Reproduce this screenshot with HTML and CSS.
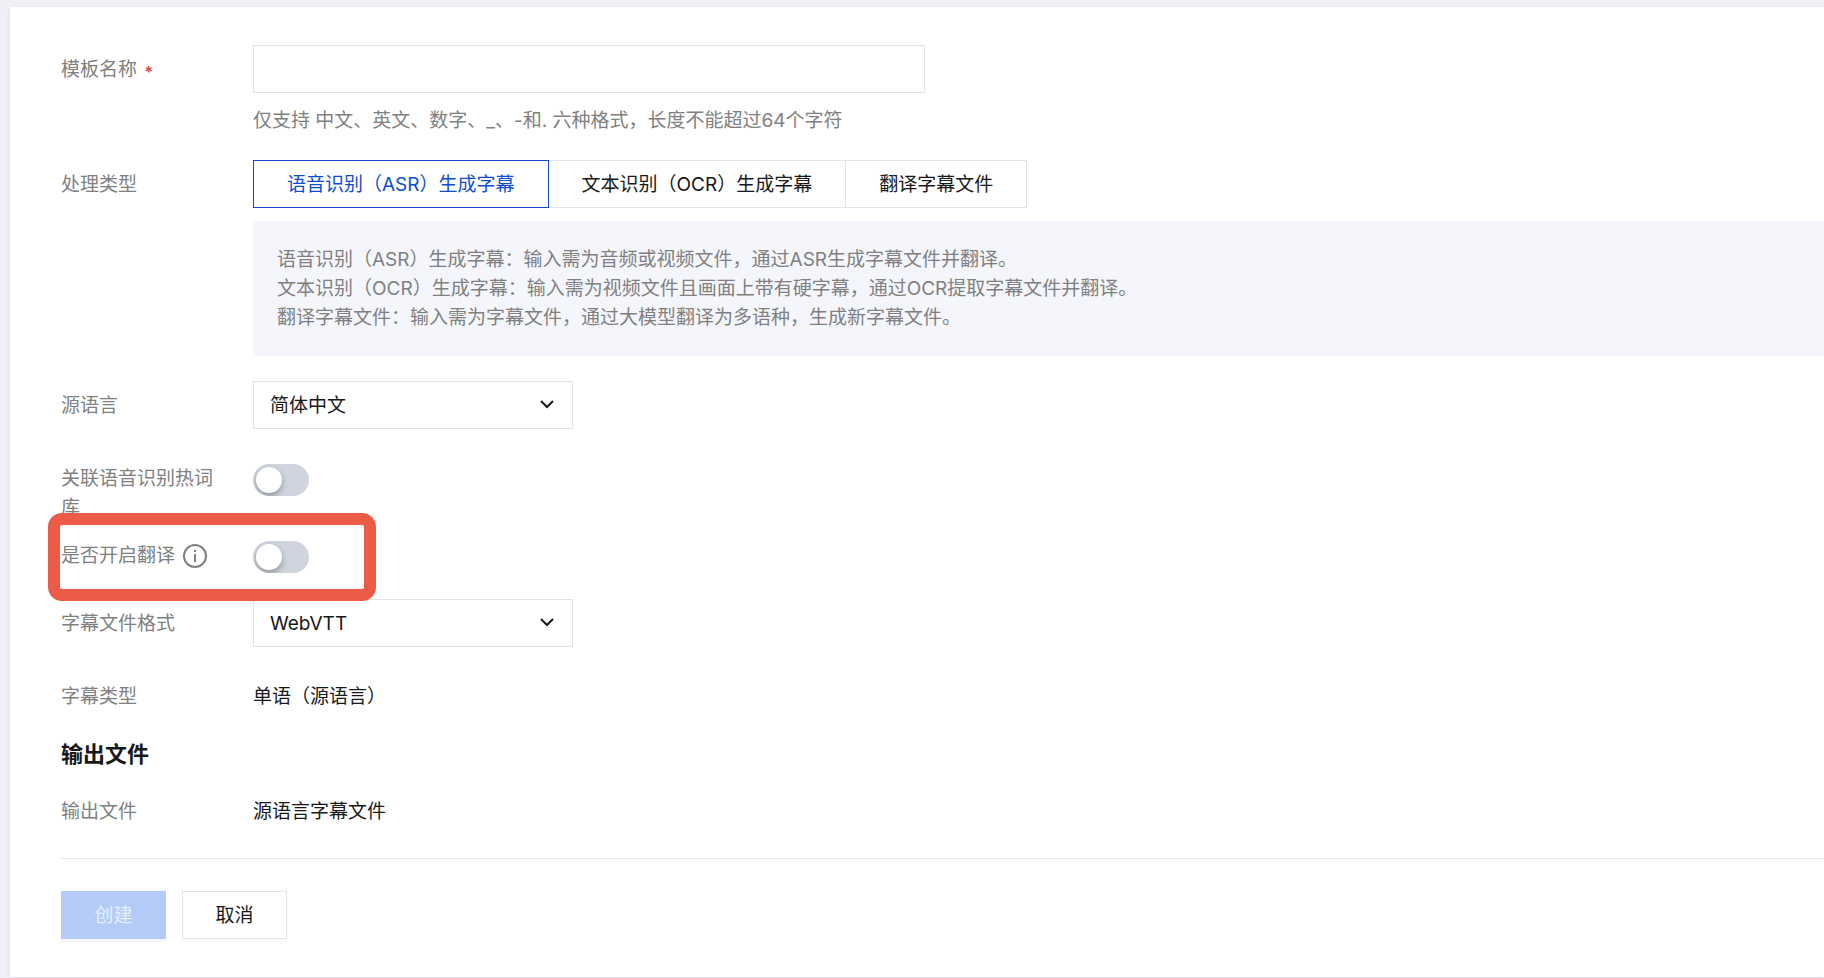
FILE: index.html
```html
<!DOCTYPE html>
<html lang="zh-CN">
  <head>
    <meta charset="UTF-8" />
    <meta name="viewport" content="width=device-width, initial-scale=1" />
    <title>新建模板</title>
    <link rel="stylesheet" href="styles.css">
  </head>
  <body>
    <form class="card">
      <div class="row">
        <label class="label" for="tplName">模板名称 <span class="required">*</span></label>
        <div class="control">
          <input type="text" id="tplName" class="text-input" />
          <p class="hint">仅支持 中文、英文、数字、_、-和. 六种格式，长度不能超过64个字符</p>
        </div>
      </div>

      <div class="row">
        <span class="label">处理类型</span>
        <div class="control">
          <div class="segment">
            <button type="button" class="active">语音识别（ASR）生成字幕</button>
            <button type="button">文本识别（OCR）生成字幕</button>
            <button type="button">翻译字幕文件</button>
          </div>
          <div class="tips">
            <p>语音识别（ASR）生成字幕：输入需为音频或视频文件，通过ASR生成字幕文件并翻译。</p>
            <p>文本识别（OCR）生成字幕：输入需为视频文件且画面上带有硬字幕，通过OCR提取字幕文件并翻译。</p>
            <p>翻译字幕文件：输入需为字幕文件，通过大模型翻译为多语种，生成新字幕文件。</p>
          </div>
        </div>
      </div>

      <div class="row">
        <label class="label" for="srcLang">源语言</label>
        <div class="select">
          <select id="srcLang">
            <option>简体中文</option>
          </select>
          <svg width="14" height="9" viewBox="0 0 14 9"><path d="M1 1l6 6 6-6" /></svg>
        </div>
      </div>

      <div class="row short hotword">
        <label class="label" for="hotword">关联语音识别热词库</label>
        <input type="checkbox" id="hotword" class="switch" />
      </div>

      <div class="row short translate">
        <label class="label with-icon" for="translate">是否开启翻译
          <svg class="info" width="24" height="24" viewBox="0 0 24 24">
            <circle cx="12" cy="12" r="11" />
            <path d="M12 10v8M12 6v2" />
          </svg>
        </label>
        <input type="checkbox" id="translate" class="switch" />
        <div class="highlight"></div>
      </div>

      <div class="row">
        <label class="label" for="format">字幕文件格式</label>
        <div class="select">
          <select id="format">
            <option>WebVTT</option>
          </select>
          <svg width="14" height="9" viewBox="0 0 14 9"><path d="M1 1l6 6 6-6" /></svg>
        </div>
      </div>

      <div class="row short">
        <span class="label">字幕类型</span>
        <span>单语（源语言）</span>
      </div>

      <h2>输出文件</h2>

      <div class="row output">
        <span class="label">输出文件</span>
        <span>源语言字幕文件</span>
      </div>

      <div class="footer">
        <button type="button" class="btn primary" disabled>创建</button>
        <button type="button" class="btn">取消</button>
      </div>
    </form>
  </body>
</html>
```
FILE: styles.css
```css
* {
  box-sizing: border-box;
}
body {
  margin: 0;
  padding: 7px 0 1px 10px;
  background-color: #f0f1f7;
  color: #16181a;
  font-family: Inter, "Noto Sans CJK SC", sans-serif;
  font-size: 19px;
  line-height: 29px;
  overflow-x: hidden;
}
p, h2 {
  margin: 0;
}
button, input, select {
  font: inherit;
  color: inherit;
}
.card {
  display: flex;
  flex-direction: column;
  gap: 25px;
  padding: 38px 0 38px 51px;
  background-color: #fff;
  box-shadow: 0 2px 4px rgba(54, 58, 80, 0.14);
}

/* form rows */
.row {
  position: relative;
  display: grid;
  grid-template-columns: 160px 1fr;
  column-gap: 32px;
  align-items: start;
}
.label {
  height: 48px;
  color: #808080;
  line-height: 50px;
}
.short {
  margin-top: 10px;
}
.short .label, .output .label {
  height: auto;
  line-height: 29px;
}
.hotword {
  height: 42px;
}
.translate {
  height: 33px;
}
.with-icon {
  display: flex;
  align-items: center;
  gap: 8px;
}
.required {
  margin-left: 2px;
  color: #e54545;
  font-size: 16px;
  font-weight: bold;
  vertical-align: -2px;
}
.control {
  display: flex;
  flex-direction: column;
  gap: 13px;
}
.text-input {
  width: 672px;
  max-width: 100%;
  height: 48px;
  padding: 0 16px;
  border: 1px solid #e1e3eb;
  outline: none;
}
.hint {
  color: #808080;
}

.segment {
  display: flex;
}
.segment button {
  height: 48px;
  padding: 0 33px;
  border: 1px solid #e1e3eb;
  background-color: #fff;
  cursor: pointer;
}
.segment button + button {
  margin-left: -1px;
}
.segment .active {
  z-index: 1;
  border-color: #0f4dcf;
  color: #0f4dcf;
}
.tips {
  padding: 24px;
  background-color: #f5f6fc;
  color: #808080;
}

.select {
  position: relative;
  width: 320px;
}
.select select {
  display: block;
  width: 100%;
  height: 48px;
  padding: 0 48px 0 16px;
  border: 1px solid #e1e3eb;
  border-radius: 0;
  background-color: #fff;
  appearance: none;
}
.select svg {
  position: absolute;
  top: 19px;
  right: 19px;
  fill: none;
  stroke: #16181a;
  stroke-width: 2;
  pointer-events: none;
}

.switch {
  position: relative;
  width: 56px;
  height: 32px;
  margin: 0;
  border-radius: 16px;
  background-color: #cfd4de;
  appearance: none;
  overflow: hidden;
  cursor: pointer;
}
.switch::before {
  content: "";
  position: absolute;
  top: 3px;
  left: 3px;
  width: 26px;
  height: 26px;
  border-radius: 50%;
  background-color: #fff;
  box-shadow: 0 3px 6px rgba(0, 0, 0, 0.3);
}
.switch:checked {
  background-color: #0f4dcf;
}
.switch:checked::before {
  left: 27px;
}
.info {
  fill: none;
  stroke: #808080;
  stroke-width: 2;
}

/* red frame round the translation switch */
.highlight {
  position: absolute;
  top: -28px;
  left: -13px;
  z-index: 2;
  width: 328px;
  height: 88px;
  border: 12px solid #ec5b48;
  border-radius: 14px;
  pointer-events: none;
}

h2 {
  font-size: 22px;
  line-height: 36px;
}
.footer {
  display: flex;
  gap: 16px;
  margin-top: 7px;
  padding-top: 32px;
  border-top: 1px solid #e5e6eb;
}
.btn {
  min-width: 105px;
  height: 48px;
  padding: 0 32px;
  border: 1px solid #e1e3eb;
  background-color: #fff;
  box-shadow: 0 3px 0 #fafafc;
  cursor: pointer;
}
.btn.primary {
  border-color: #b4cbf8;
  background-color: #b4cbf8;
  box-shadow: 0 3px 0 #f3f6fd;
  color: #e6eefd;
}
```
